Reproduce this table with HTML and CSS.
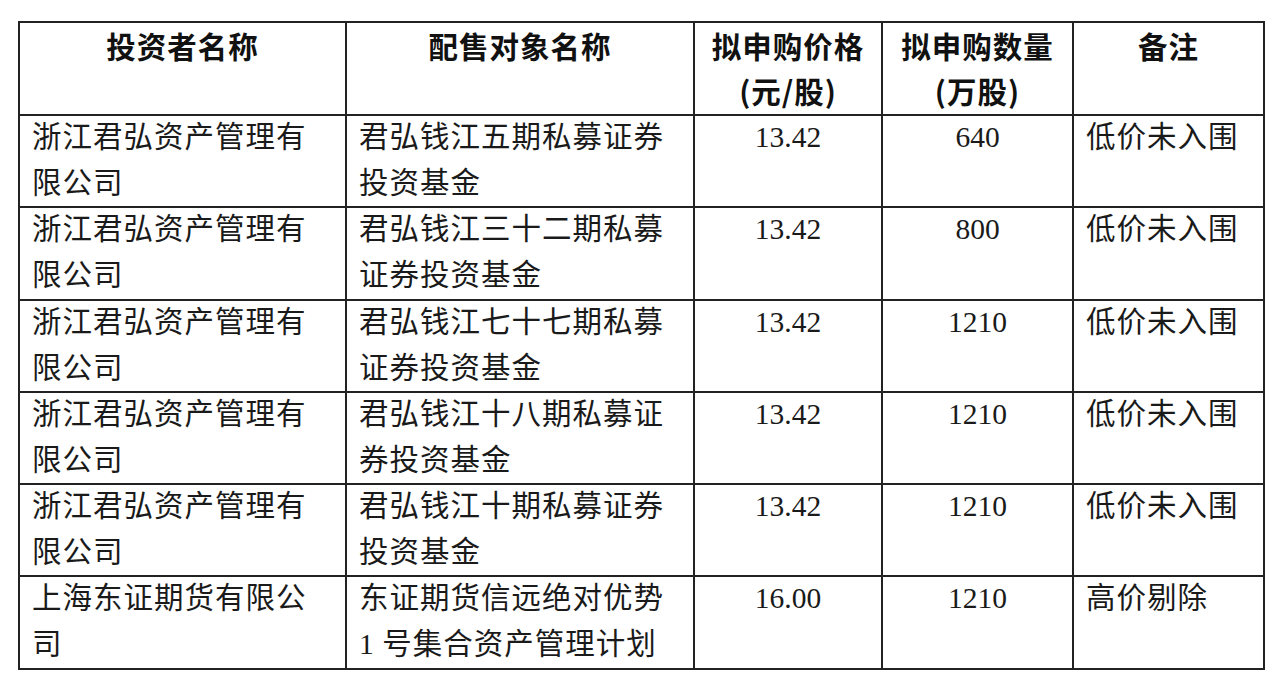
FILE: index.html
```html
<!DOCTYPE html>
<html lang="zh-CN">
<head>
<meta charset="utf-8">
<title>配售对象</title>
<link rel="stylesheet" href="styles.css">
</head>
<body>
<table class="alloc">
  <colgroup>
    <col class="c-investor">
    <col class="c-object">
    <col class="c-price">
    <col class="c-qty">
    <col class="c-note">
  </colgroup>
  <thead>
    <tr>
      <th>投资者名称</th>
      <th>配售对象名称</th>
      <th>拟申购价格<br>(元/股)</th>
      <th>拟申购数量<br>(万股)</th>
      <th>备注</th>
    </tr>
  </thead>
  <tbody>
    <tr>
      <td class="txt"><div class="cell">浙江君弘资产管理有<br>限公司</div></td>
      <td class="txt"><div class="cell">君弘钱江五期私募证券<br>投资基金</div></td>
      <td class="num"><div class="cell">13.42</div></td>
      <td class="num"><div class="cell">640</div></td>
      <td class="txt"><div class="cell">低价未入围</div></td>
    </tr>
    <tr>
      <td class="txt"><div class="cell">浙江君弘资产管理有<br>限公司</div></td>
      <td class="txt"><div class="cell">君弘钱江三十二期私募<br>证券投资基金</div></td>
      <td class="num"><div class="cell">13.42</div></td>
      <td class="num"><div class="cell">800</div></td>
      <td class="txt"><div class="cell">低价未入围</div></td>
    </tr>
    <tr>
      <td class="txt"><div class="cell">浙江君弘资产管理有<br>限公司</div></td>
      <td class="txt"><div class="cell">君弘钱江七十七期私募<br>证券投资基金</div></td>
      <td class="num"><div class="cell">13.42</div></td>
      <td class="num"><div class="cell">1210</div></td>
      <td class="txt"><div class="cell">低价未入围</div></td>
    </tr>
    <tr>
      <td class="txt"><div class="cell">浙江君弘资产管理有<br>限公司</div></td>
      <td class="txt"><div class="cell">君弘钱江十八期私募证<br>券投资基金</div></td>
      <td class="num"><div class="cell">13.42</div></td>
      <td class="num"><div class="cell">1210</div></td>
      <td class="txt"><div class="cell">低价未入围</div></td>
    </tr>
    <tr>
      <td class="txt"><div class="cell">浙江君弘资产管理有<br>限公司</div></td>
      <td class="txt"><div class="cell">君弘钱江十期私募证券<br>投资基金</div></td>
      <td class="num"><div class="cell">13.42</div></td>
      <td class="num"><div class="cell">1210</div></td>
      <td class="txt"><div class="cell">低价未入围</div></td>
    </tr>
    <tr>
      <td class="txt"><div class="cell">上海东证期货有限公<br>司</div></td>
      <td class="txt"><div class="cell">东证期货信远绝对优势<br><span class="digit">1</span> 号集合资产管理计划</div></td>
      <td class="num"><div class="cell">16.00</div></td>
      <td class="num"><div class="cell">1210</div></td>
      <td class="txt"><div class="cell">高价剔除</div></td>
    </tr>
  </tbody>
</table>
</body>
</html>
```

FILE: styles.css
```css
html, body {
  margin: 0;
  padding: 0;
  background: #ffffff;
}

body {
  padding: 21px 0 0 18px;
}

.alloc {
  border-collapse: collapse;
  table-layout: fixed;
  width: 1245px;
  color: #1a1a1a;
}

.c-investor { width: 327px; }
.c-object   { width: 348px; }
.c-price    { width: 188px; }
.c-qty      { width: 191px; }
.c-note     { width: 191px; }

.alloc th,
.alloc td {
  border: 2px solid #222222;
  vertical-align: top;
  padding: 0;
}

.alloc th {
  height: 91px;
  font-family: "Noto Sans CJK SC", "Liberation Sans", sans-serif;
  font-weight: 700;
  font-size: 29.5px;
  letter-spacing: 1px;
  line-height: 45px;
  text-align: center;
  color: #111111;
}

.alloc td {
  height: 90.3px;
  line-height: 46px;
}

.alloc td.txt {
  font-family: "Noto Sans CJK SC", "Liberation Serif", serif;
  font-size: 29.5px;
  letter-spacing: 1px;
  text-align: left;
  padding-left: 12px;
}

.alloc td.txt .cell {
  margin-top: -5px;
}

.alloc td.num .cell {
  margin-top: -2px;
}

.alloc td.num {
  font-family: "Liberation Serif", "Times New Roman", serif;
  font-size: 29.5px;
  text-align: center;
}

.digit {
  font-family: "Liberation Serif", serif;
}
```
